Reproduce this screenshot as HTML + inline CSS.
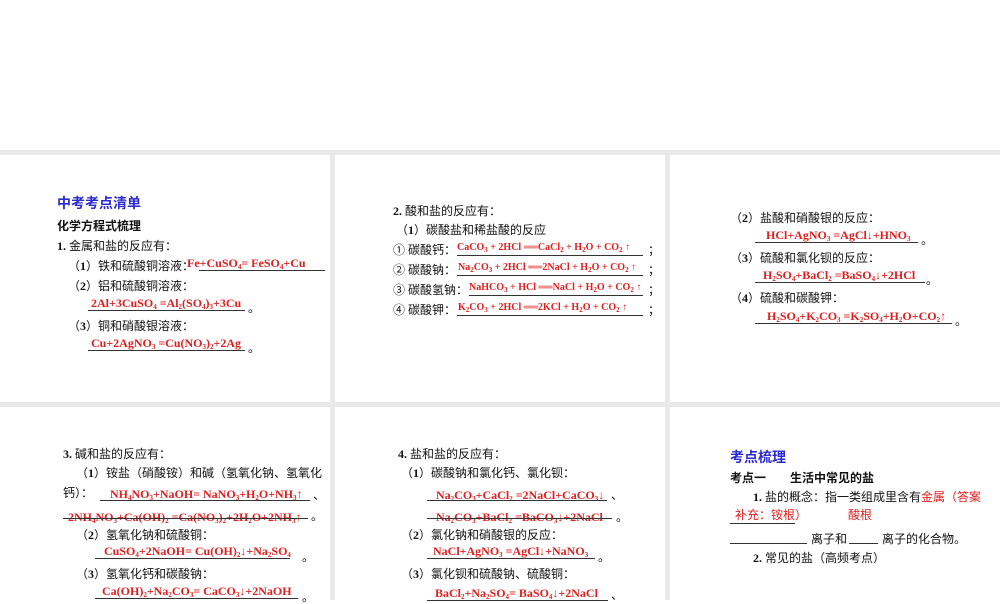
<!DOCTYPE html>
<html><head><meta charset="utf-8"><style>
body{margin:0;width:1000px;height:600px;position:relative;overflow:hidden;background:#fff;font-family:"Liberation Serif","Noto Sans CJK SC",sans-serif;}
.g{position:absolute;background:#e9e9e9}
.t{position:absolute;font-size:12px;line-height:14px;color:#111;white-space:nowrap}
.r{position:absolute;font-size:12px;line-height:14px;color:#e02020;font-weight:bold;white-space:nowrap;font-family:"Liberation Serif",serif}
.s{font-size:10px}
.u{position:absolute;height:1px;background:#333}
.h{position:absolute;font-size:14px;line-height:16px;color:#2a2ad0;font-weight:bold;font-family:"Liberation Sans","Noto Sans CJK SC",sans-serif}
.b{font-weight:bold}
sub{font-size:7px;vertical-align:-2px;line-height:0}
</style></head><body>
<div class="g" style="left:0;top:150px;width:1000px;height:5px"></div>
<div class="g" style="left:0;top:402px;width:1000px;height:5px"></div>
<div class="g" style="left:330px;top:150px;width:5px;height:450px"></div>
<div class="g" style="left:665px;top:150px;width:5px;height:450px"></div>

<!-- panel 1 -->
<div class="h" style="left:57px;top:195px">中考考点清单</div>
<div class="t b" style="left:57px;top:219px">化学方程式梳理</div>
<div class="t" style="left:57px;top:239px"><b>1.</b> 金属和盐的反应有：</div>
<div class="t" style="left:68px;top:259px">（<b>1</b>）铁和硫酸铜溶液：</div>
<div class="r" style="left:187px;top:256px">Fe+CuSO<sub>4</sub>= FeSO<sub>4</sub>+Cu</div>
<div class="u" style="left:199px;top:270px;width:126px"></div>
<div class="t" style="left:68px;top:279px">（<b>2</b>）铝和硫酸铜溶液：</div>
<div class="r" style="left:91px;top:296px">2Al+3CuSO<sub>4</sub> =Al<sub>2</sub>(SO<sub>4</sub>)<sub>3</sub>+3Cu</div>
<div class="u" style="left:88px;top:310px;width:157px"></div>
<div class="t" style="left:248px;top:301px">。</div>
<div class="t" style="left:68px;top:319px">（<b>3</b>）铜和硝酸银溶液：</div>
<div class="r" style="left:91px;top:336px">Cu+2AgNO<sub>3</sub> =Cu(NO<sub>3</sub>)<sub>2</sub>+2Ag</div>
<div class="u" style="left:88px;top:350px;width:157px"></div>
<div class="t" style="left:248px;top:341px">。</div>

<!-- panel 2 -->
<div class="t" style="left:393px;top:204px"><b>2.</b> 酸和盐的反应有：</div>
<div class="t" style="left:396px;top:223px">（<b>1</b>）碳酸盐和稀盐酸的反应</div>
<div class="t" style="left:393px;top:243px">① 碳酸钙：</div>
<div class="r s" style="left:457px;top:241px">CaCO<sub>3</sub> + 2HCl ══CaCl<sub>2</sub> + H<sub>2</sub>O + CO<sub>2</sub> ↑</div>
<div class="u" style="left:457px;top:255px;width:186px"></div>
<div class="t" style="left:648px;top:243px">；</div>
<div class="t" style="left:393px;top:263px">② 碳酸钠：</div>
<div class="r s" style="left:458px;top:261px">Na<sub>2</sub>CO<sub>3</sub> + 2HCl ══2NaCl + H<sub>2</sub>O + CO<sub>2</sub> ↑</div>
<div class="u" style="left:457px;top:275px;width:186px"></div>
<div class="t" style="left:648px;top:263px">；</div>
<div class="t" style="left:393px;top:283px">③ 碳酸氢钠：</div>
<div class="r s" style="left:469px;top:281px">NaHCO<sub>3</sub> + HCl ══NaCl + H<sub>2</sub>O + CO<sub>2</sub> ↑</div>
<div class="u" style="left:469px;top:295px;width:174px"></div>
<div class="t" style="left:648px;top:283px">；</div>
<div class="t" style="left:393px;top:303px">④ 碳酸钾：</div>
<div class="r s" style="left:458px;top:301px">K<sub>2</sub>CO<sub>3</sub> + 2HCl ══2KCl + H<sub>2</sub>O + CO<sub>2</sub> ↑</div>
<div class="u" style="left:457px;top:315px;width:186px"></div>
<div class="t" style="left:648px;top:303px">；</div>

<!-- panel 3 -->
<div class="t" style="left:730px;top:211px">（<b>2</b>）盐酸和硝酸银的反应：</div>
<div class="r" style="left:766px;top:228px">HCl+AgNO<sub>3</sub> =AgCl↓+HNO<sub>3</sub></div>
<div class="u" style="left:755px;top:242px;width:163px"></div>
<div class="t" style="left:921px;top:233px">。</div>
<div class="t" style="left:730px;top:251px">（<b>3</b>）硫酸和氯化钡的反应：</div>
<div class="r" style="left:763px;top:268px">H<sub>2</sub>SO<sub>4</sub>+BaCl<sub>2</sub> =BaSO<sub>4</sub>↓+2HCl</div>
<div class="u" style="left:755px;top:282px;width:170px"></div>
<div class="t" style="left:926px;top:273px">。</div>
<div class="t" style="left:730px;top:291px">（<b>4</b>）硫酸和碳酸钾：</div>
<div class="r" style="left:767px;top:309px">H<sub>2</sub>SO<sub>4</sub>+K<sub>2</sub>CO<sub>3</sub> =K<sub>2</sub>SO<sub>4</sub>+H<sub>2</sub>O+CO<sub>2</sub>↑</div>
<div class="u" style="left:755px;top:323px;width:197px"></div>
<div class="t" style="left:955px;top:314px">。</div>

<!-- panel 4 -->
<div class="t" style="left:63px;top:447px"><b>3.</b> 碱和盐的反应有：</div>
<div class="t" style="left:76px;top:466px">（<b>1</b>）铵盐（硝酸铵）和碱（氢氧化钠、氢氧化</div>
<div class="t" style="left:63px;top:486px">钙）：</div>
<div class="r" style="left:110px;top:487px">NH<sub>4</sub>NO<sub>3</sub>+NaOH= NaNO<sub>3</sub>+H<sub>2</sub>O+NH<sub>3</sub>↑</div>
<div class="u" style="left:100px;top:500px;width:210px"></div>
<div class="t" style="left:313px;top:488px">、</div>
<div class="r" style="left:68px;top:510px">2NH<sub>4</sub>NO<sub>3</sub>+Ca(OH)<sub>2</sub> =Ca(NO<sub>3</sub>)<sub>2</sub>+2H<sub>2</sub>O+2NH<sub>3</sub>↑</div>
<div class="u" style="left:63px;top:518px;width:245px"></div>
<div class="t" style="left:311px;top:509px">。</div>
<div class="t" style="left:76px;top:528px">（<b>2</b>）氢氧化钠和硫酸铜：</div>
<div class="r" style="left:104px;top:544px">CuSO<sub>4</sub>+2NaOH= Cu(OH)<sub>2</sub>↓+Na<sub>2</sub>SO<sub>4</sub></div>
<div class="u" style="left:95px;top:558px;width:195px"></div>
<div class="t" style="left:302px;top:550px">。</div>
<div class="t" style="left:76px;top:567px">（<b>3</b>）氢氧化钙和碳酸钠：</div>
<div class="r" style="left:102px;top:584px">Ca(OH)<sub>2</sub>+Na<sub>2</sub>CO<sub>3</sub>= CaCO<sub>3</sub>↓+2NaOH</div>
<div class="u" style="left:95px;top:598px;width:203px"></div>
<div class="t" style="left:302px;top:590px">。</div>

<!-- panel 5 -->
<div class="t" style="left:398px;top:447px"><b>4.</b> 盐和盐的反应有：</div>
<div class="t" style="left:401px;top:466px">（<b>1</b>）碳酸钠和氯化钙、氯化钡：</div>
<div class="r" style="left:436px;top:488px">Na<sub>2</sub>CO<sub>3</sub>+CaCl<sub>2</sub> =2NaCl+CaCO<sub>3</sub>↓</div>
<div class="u" style="left:427px;top:500px;width:180px"></div>
<div class="t" style="left:611px;top:488px">、</div>
<div class="r" style="left:436px;top:510px">Na<sub>2</sub>CO<sub>3</sub>+BaCl<sub>2</sub> =BaCO<sub>3</sub>↓+2NaCl</div>
<div class="u" style="left:427px;top:518px;width:185px"></div>
<div class="t" style="left:616px;top:510px">。</div>
<div class="t" style="left:401px;top:528px">（<b>2</b>）氯化钠和硝酸银的反应：</div>
<div class="r" style="left:433px;top:544px">NaCl+AgNO<sub>3</sub> =AgCl↓+NaNO<sub>3</sub></div>
<div class="u" style="left:427px;top:558px;width:168px"></div>
<div class="t" style="left:598px;top:550px">。</div>
<div class="t" style="left:401px;top:567px">（<b>3</b>）氯化钡和硫酸钠、硫酸铜：</div>
<div class="r" style="left:435px;top:586px">BaCl<sub>2</sub>+Na<sub>2</sub>SO<sub>4</sub>= BaSO<sub>4</sub>↓+2NaCl</div>
<div class="u" style="left:427px;top:600px;width:181px"></div>
<div class="t" style="left:611px;top:588px">、</div>

<!-- panel 6 -->
<div class="h" style="left:730px;top:449px">考点梳理</div>
<div class="t b" style="left:730px;top:471px">考点一</div>
<div class="t b" style="left:790px;top:471px">生活中常见的盐</div>
<div class="t" style="left:753px;top:490px"><b>1.</b> 盐的概念：指一类组成里含有<span style="color:#e02020">金属（答案</span></div>
<div class="t" style="left:735px;top:508px;color:#e02020">补充：铵根）</div>
<div class="t" style="left:848px;top:508px;color:#e02020">酸根</div>
<div class="u" style="left:730px;top:523px;width:65px"></div>
<div class="u" style="left:730px;top:543px;width:77px"></div>
<div class="t" style="left:811px;top:532px">离子和</div>
<div class="u" style="left:849px;top:543px;width:29px"></div>
<div class="t" style="left:882px;top:532px">离子的化合物。</div>
<div class="t" style="left:753px;top:551px"><b>2.</b> 常见的盐（高频考点）</div>
</body></html>
